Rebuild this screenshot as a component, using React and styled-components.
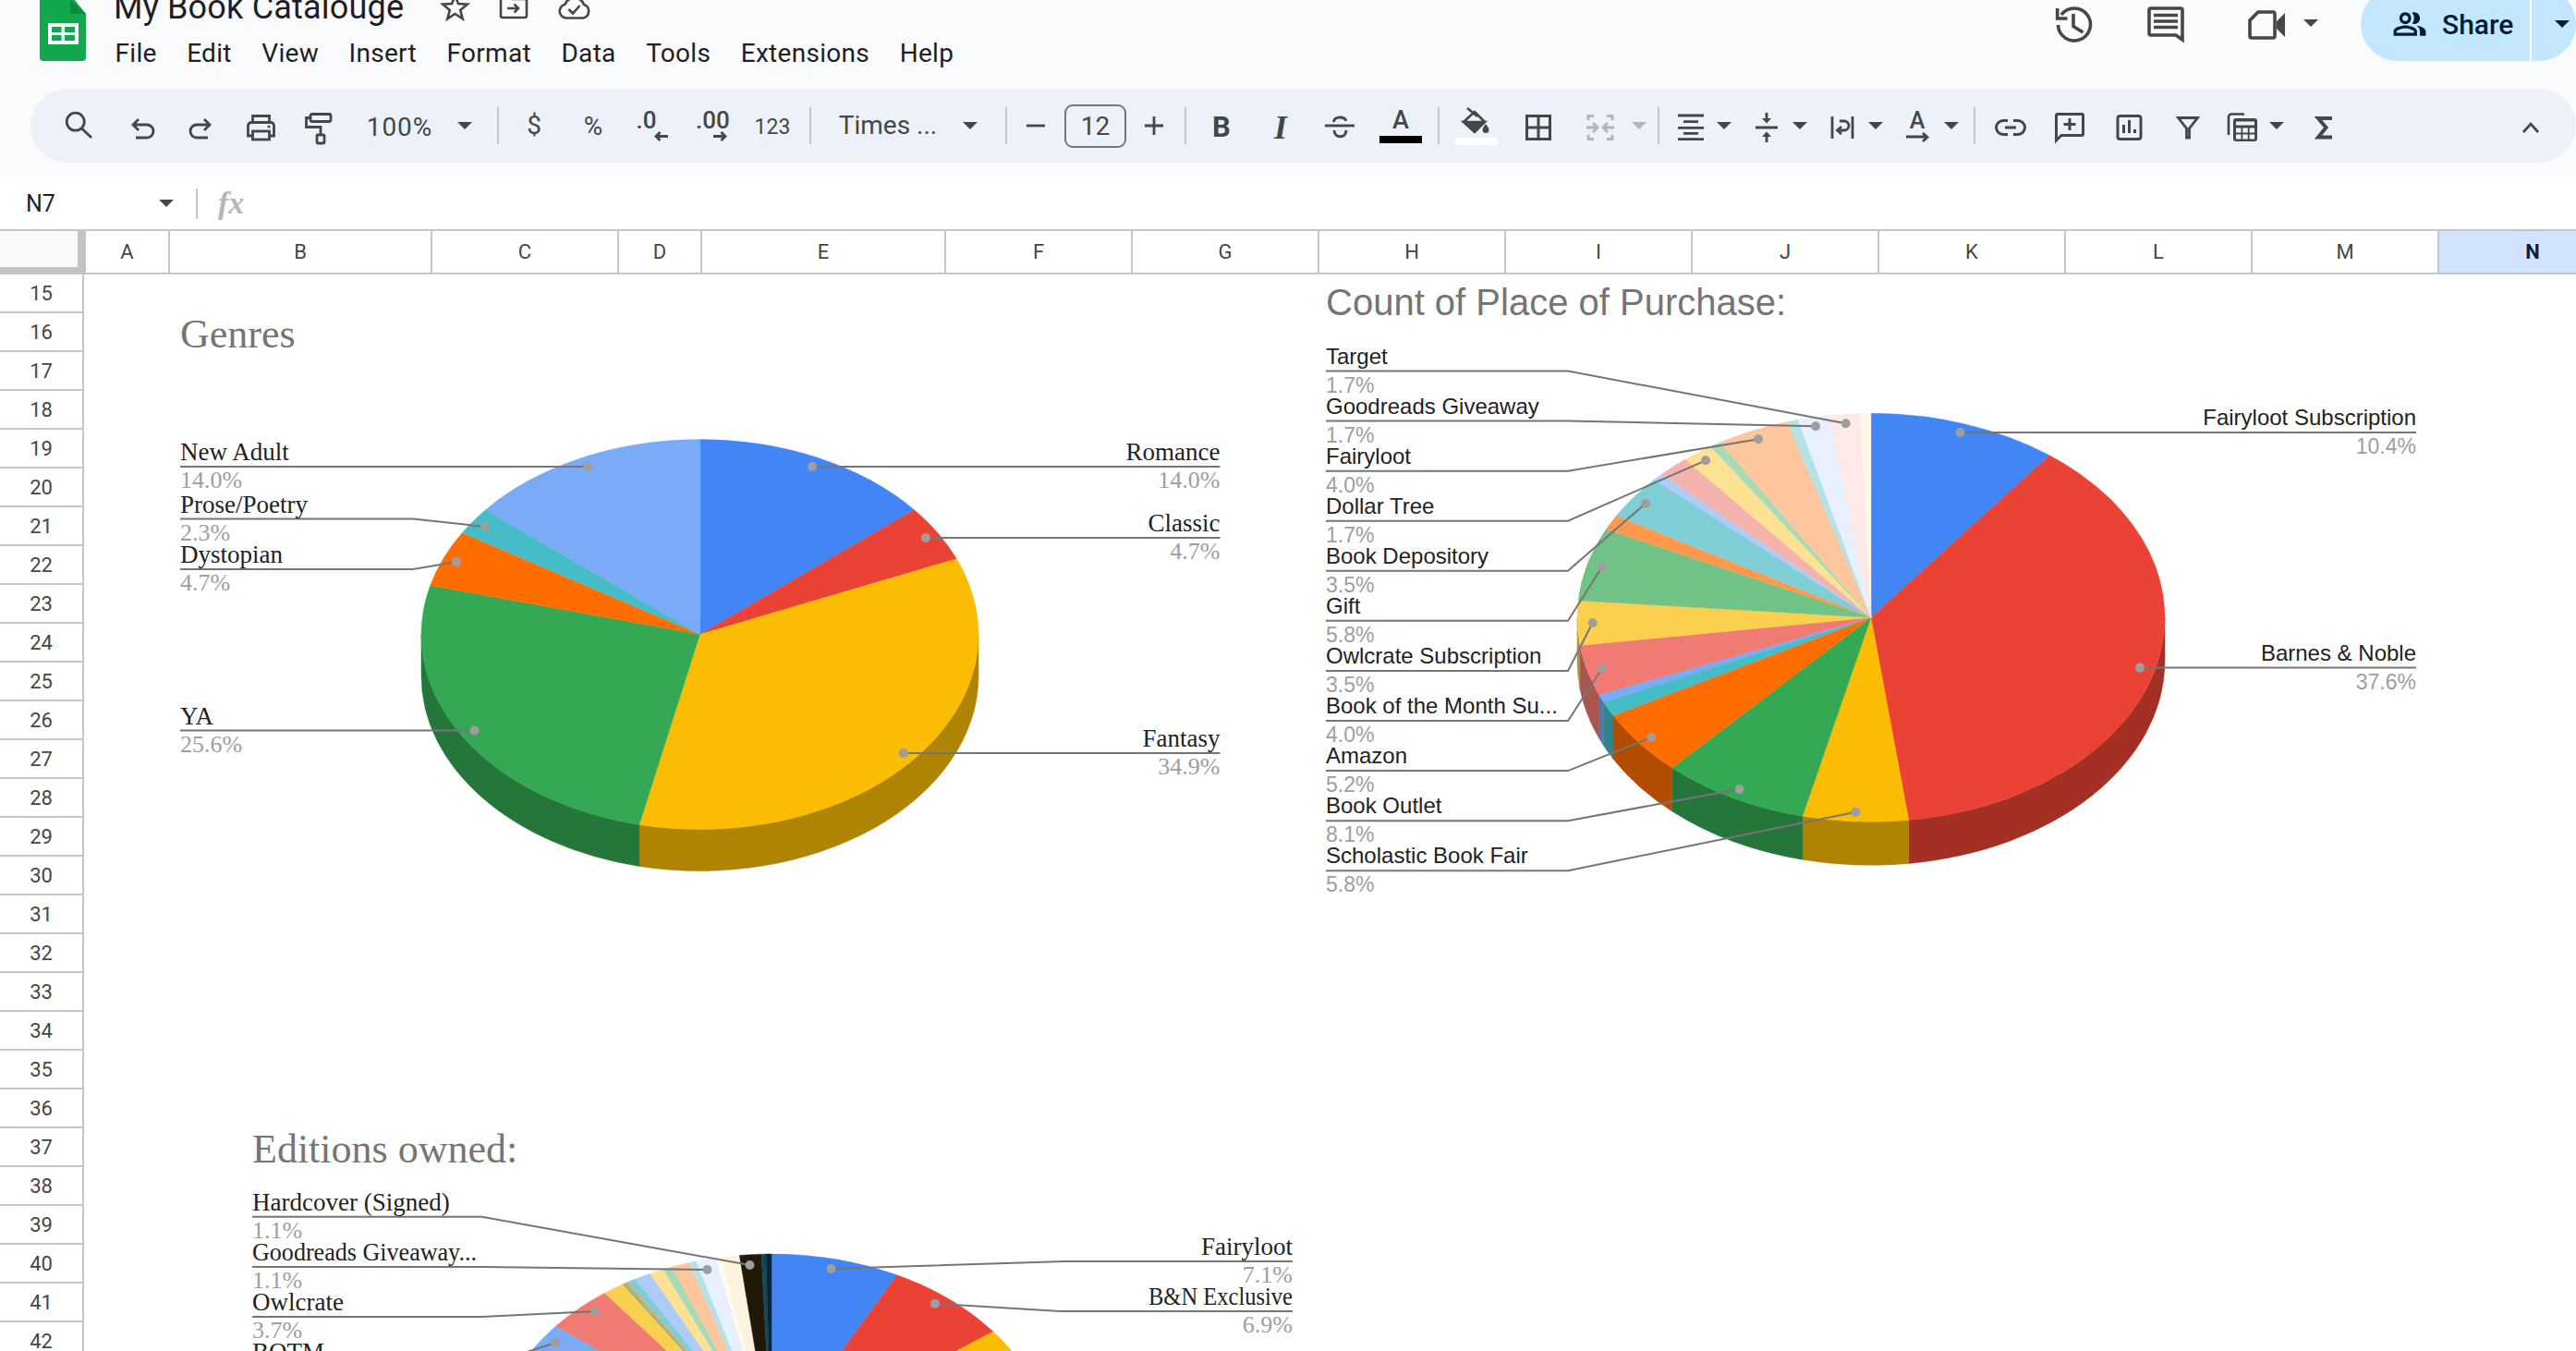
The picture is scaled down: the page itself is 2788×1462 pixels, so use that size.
import React from 'react';
import styled, { createGlobalStyle } from 'styled-components';
import { MdOutlinePeopleAlt } from 'react-icons/md';

const GlobalStyle = createGlobalStyle`
  html, body {
    margin: 0;
    padding: 0;
    background: #ffffff;
  }
  body {
    font-family: Roboto, "Liberation Sans", sans-serif;
    color: #1f1f1f;
  }
`;

const INK = '#444746';
const LINE = '#c4c7c5';

const Page = styled.div`
  width: 2788px;
  height: 1462px;
  overflow: hidden;
  display: flex;
  flex-direction: column;
  background: #fff;
`;

/* top header */
const Header = styled.header`
  height: 96px;
  flex: none;
  display: flex;
  align-items: flex-start;
  padding-left: 43px;
  background: #f9fbfd;
  overflow: hidden;
`;

const TitleBlock = styled.div`
  margin: -13px 0 0 30px;
  display: flex;
  flex-direction: column;
`;

const TitleRow = styled.div`
  height: 42px;
  display: flex;
  align-items: center;
`;

const DocTitle = styled.div`
  font-size: 36px;
  line-height: 42px;
  letter-spacing: 0.2px;
  color: #1f1f1f;
  white-space: nowrap;
`;

const TitleIcon = styled.svg`
  flex: none;
  margin: 4px 0 0 ${p => p.$ml}px;
  overflow: visible;
  fill: none;
  stroke: ${INK};
  stroke-width: 2.6;
`;

const MenuBar = styled.nav`
  display: flex;
  gap: 32.5px;
  margin: 11px 0 0 1.5px;
`;

const MenuItem = styled.span`
  font-size: 28px;
  line-height: 36px;
  letter-spacing: 0.3px;
  color: #1f1f1f;
`;

const HeaderRight = styled.div`
  margin-left: auto;
  display: flex;
  align-items: flex-start;
`;

const HeaderIcon = styled.svg`
  flex: none;
  margin: ${p => p.$mt || 7}px 0 0 ${p => p.$ml || 0}px;
  overflow: visible;
  fill: none;
  stroke: ${INK};
  stroke-width: 3.6;
`;

const ShareButton = styled.div`
  width: 233px;
  height: 80px;
  margin: -14px 0 0 46px;
  flex: none;
  display: flex;
  align-items: center;
  padding-left: 34px;
  box-sizing: border-box;
  background: #c2e7ff;
  border-radius: 40px;
  color: #001d35;
  font-size: 30px;
  font-weight: 500;
`;

const ShareLabel = styled.span`
  margin-left: 16px;
  width: 95px;
`;

const ShareDivider = styled.span`
  width: 2px;
  height: 80px;
  background: #f9fbfd;
`;

const Caret = styled.span`
  flex: none;
  width: 0;
  height: 0;
  margin: ${p => p.$mt || 0}px 0 0 ${p => p.$ml || 0}px;
  border-left: 8px solid transparent;
  border-right: 8px solid transparent;
  border-top: 8px solid ${p => p.$color || INK};
`;

/* toolbar */
const ToolbarWrap = styled.div`
  flex: none;
  height: 96px;
  padding: 0 0 16px 33px;
  box-sizing: border-box;
  background: #f9fbfd;
`;

const Toolbar = styled.div`
  height: 80px;
  display: flex;
  align-items: center;
  padding: 0 17px 0 19px;
  border-radius: 40px;
  background: #edf2fa;
`;

const Tool = styled.div`
  flex: none;
  width: ${p => p.$w || 64}px;
  margin-left: ${p => p.$ml || 0}px;
  display: flex;
  flex-direction: ${p => (p.$column ? 'column' : 'row')};
  align-items: center;
  justify-content: center;
  color: ${INK};
`;

const ToolText = styled.span`
  font-size: ${p => p.$size || 28}px;
  font-weight: ${p => p.$weight || 400};
  letter-spacing: ${p => p.$spacing || 0}px;
  line-height: 1;
  padding-top: ${p => p.$dy ?? 3}px;
  white-space: nowrap;
`;

const ItalicGlyph = styled.span`
  font-family: "Liberation Serif", serif;
  font-style: italic;
  font-weight: 700;
  font-size: 36px;
  line-height: 1;
  padding-top: 3px;
`;

const Sep = styled.span`
  flex: none;
  width: 2px;
  height: 40px;
  margin: 0 ${p => p.$r}px 0 ${p => p.$l}px;
  background: ${LINE};
`;

const FontSizeBox = styled.div`
  flex: none;
  width: 67px;
  height: 47px;
  margin-left: 7px;
  box-sizing: border-box;
  border: 2px solid #747775;
  border-radius: 9px;
  display: flex;
  align-items: center;
  justify-content: center;
  font-size: 28px;
  color: ${INK};
`;

const ColorBar = styled.span`
  display: block;
  width: 46px;
  height: 8px;
  margin-top: ${p => p.$mt}px;
  background: ${p => p.$color};
`;

const DecimalStack = styled.div`
  width: 34px;
  display: flex;
  flex-direction: column;
  font-size: 26px;
  line-height: 21px;
  font-weight: 500;
`;

const ArrowIcon = styled.svg`
  align-self: flex-end;
  display: block;
  margin-top: 1px;
  fill: none;
  stroke: ${INK};
  stroke-width: 2.8;
`;

const Ico = styled.svg.attrs({ width: 36, height: 36, viewBox: '0 0 36 36' })`
  display: block;
  overflow: visible;
  fill: none;
  stroke: ${p => p.$color || INK};
  stroke-width: ${p => p.$sw || 2.8};
`;

const FillIco = styled.svg.attrs({ width: 36, height: 30, viewBox: '0 0 36 30' })`
  display: block;
  overflow: visible;
  fill: none;
  stroke: ${INK};
  stroke-width: 2.6;
`;

const ChevronTool = styled(Tool)`
  margin-left: auto;
`;

/* formula bar */
const FormulaBar = styled.div`
  flex: none;
  height: 56px;
  display: flex;
  align-items: center;
  background: #fff;
`;

const NameBox = styled.div`
  width: 212px;
  padding: 0 24px 0 28px;
  box-sizing: border-box;
  display: flex;
  align-items: center;
  justify-content: space-between;
  font-size: 25px;
  color: #1f1f1f;
`;

const BarDivider = styled.span`
  width: 2px;
  height: 33px;
  background: ${LINE};
`;

const FxMark = styled.span`
  margin-left: 22px;
  font-family: "Liberation Serif", serif;
  font-style: italic;
  font-weight: 700;
  font-size: 34px;
  color: #b4b6b7;
`;

/* column header */
const ColumnHeaders = styled.div`
  flex: none;
  height: 45px;
  display: flex;
  border-top: 2px solid ${LINE};
  border-bottom: 2px solid ${LINE};
`;

const Corner = styled.div`
  flex: none;
  width: 93px;
  height: 47px;
  margin-bottom: -2px;
  box-sizing: border-box;
  background: #f8f9fa;
  border-right: 9px solid #c4c4c4;
  border-bottom: 8px solid #c4c4c4;
`;

const ColHead = styled.div`
  flex: none;
  width: ${p => p.$w}px;
  box-sizing: border-box;
  display: flex;
  align-items: center;
  justify-content: center;
  font-size: 22px;
  font-weight: ${p => (p.$active ? 700 : 400)};
  color: ${p => (p.$active ? '#041e49' : INK)};
  background: ${p => (p.$active ? '#d3e3fd' : '#fff')};
  border-right: ${p => (p.$active ? 'none' : `2px solid ${LINE}`)};
`;

/* sheet */
const Sheet = styled.div`
  flex: 1;
  min-height: 0;
  display: flex;
  overflow: hidden;
`;

const RowHeaders = styled.div`
  flex: none;
  width: 91px;
  box-sizing: border-box;
  border-right: 2px solid ${LINE};
`;

const RowHead = styled.div`
  height: 42px;
  box-sizing: border-box;
  border-bottom: 2px solid ${LINE};
  display: flex;
  align-items: center;
  justify-content: center;
  font-size: 22px;
  color: ${INK};
`;

const Canvas = styled.div`
  position: relative;
  flex: 1;
  background: #fff;
`;

const ChartFrame = styled.svg`
  position: absolute;
  left: ${p => p.$x - 91}px;
  top: ${p => p.$y - 297}px;
  font-family: ${p => (p.$serif ? '"Liberation Serif", serif' : '"Liberation Sans", sans-serif')};
`;

const ChartTitle = styled.text`
  font-size: ${p => p.$size}px;
  fill: #757575;
`;

const LabelName = styled.text`
  font-size: ${p => p.$size}px;
  fill: #222222;
`;

const LabelPct = styled.text`
  font-size: ${p => p.$size}px;
  fill: #9e9e9e;
`;

const Leader = styled.polyline`
  fill: none;
  stroke: #757575;
  stroke-width: 2;
`;

const Dot = styled.circle`
  fill: #9e9e9e;
`;

const COLUMNS = [
  ['A', 91], ['B', 284], ['C', 202], ['D', 90], ['E', 264], ['F', 202], ['G', 202],
  ['H', 202], ['I', 202], ['J', 202], ['K', 202], ['L', 202], ['M', 202], ['N', 202],
];
const ROWS = Array.from({ length: 28 }, (_, i) => 15 + i);
const MENU = ['File', 'Edit', 'View', 'Insert', 'Format', 'Data', 'Tools', 'Extensions', 'Help'];

const darken = (hex) => {
  const n = parseInt(hex.slice(1), 16);
  const part = (v) => Math.round(v * 0.7).toString(16).padStart(2, '0');
  return `#${part(n >> 16)}${part((n >> 8) & 255)}${part(n & 255)}`;
};

const Pie3D = ({ cx, cy, rx, ry, depth, slices }) => {
  const total = slices.reduce((sum, s) => sum + s.pct, 0);
  const pt = (p) => {
    const a = (p / 100) * 2 * Math.PI;
    return [cx + rx * Math.sin(a), cy - ry * Math.cos(a)];
  };
  let acc = 0;
  const parts = slices.map((s) => {
    const from = acc;
    acc += (s.pct / total) * 100;
    return { color: s.color, from, to: acc };
  });
  return (
    <g>
      {parts.map((s, i) => {
        const lo = Math.max(s.from, 25);
        const hi = Math.min(s.to, 75);
        if (hi <= lo) return null;
        const [x0, y0] = pt(lo);
        const [x1, y1] = pt(hi);
        const wall = darken(s.color);
        return (
          <path
            key={`w${i}`}
            fill={wall}
            stroke={wall}
            strokeWidth="0.5"
            d={`M${x0} ${y0}A${rx} ${ry} 0 0 1 ${x1} ${y1}L${x1} ${y1 + depth}A${rx} ${ry} 0 0 0 ${x0} ${y0 + depth}Z`}
          />
        );
      })}
      {parts.map((s, i) => {
        const [x0, y0] = pt(s.from);
        const [x1, y1] = pt(s.to);
        const large = s.to - s.from > 50 ? 1 : 0;
        return (
          <path
            key={`t${i}`}
            fill={s.color}
            stroke={s.color}
            strokeWidth="0.4"
            d={`M${cx} ${cy}L${x0} ${y0}A${rx} ${ry} 0 ${large} 1 ${x1} ${y1}Z`}
          />
        );
      })}
    </g>
  );
};

const Callout = ({ label, size, textX, end, lift = 7 }) => {
  const { name, pct, y, elbow, dot, fit } = label;
  const anchor = end ? 'end' : 'start';
  const points = [[textX, y]];
  if (elbow) points.push([elbow, y]);
  points.push(dot);
  return (
    <g>
      <Leader points={points.map((p) => p.join(',')).join(' ')} />
      <Dot cx={dot[0]} cy={dot[1]} r="5" />
      <LabelName
        x={textX}
        y={y - lift}
        $size={size}
        textAnchor={anchor}
        textLength={fit}
        lengthAdjust={fit ? 'spacingAndGlyphs' : undefined}
      >
        {name}
      </LabelName>
      {pct && <LabelPct x={textX} y={y + 23} $size={size - 1} textAnchor={anchor}>{pct}</LabelPct>}
    </g>
  );
};

const GENRE_SLICES = [
  { pct: 14.0, color: '#4285f4' },
  { pct: 4.7, color: '#ea4335' },
  { pct: 34.9, color: '#fbbc04' },
  { pct: 25.6, color: '#34a853' },
  { pct: 4.7, color: '#ff6d01' },
  { pct: 2.3, color: '#46bdc6' },
  { pct: 14.0, color: '#7baaf7' },
];

const GENRE_LEFT = [
  { name: 'New Adult', pct: '14.0%', y: 505, dot: [636, 505] },
  { name: 'Prose/Poetry', pct: '2.3%', y: 561.5, elbow: 447, dot: [525, 570] },
  { name: 'Dystopian', pct: '4.7%', y: 616, elbow: 447, dot: [494, 608] },
  { name: 'YA', pct: '25.6%', y: 790.5, dot: [513.5, 790.5] },
];

const GENRE_RIGHT = [
  { name: 'Romance', pct: '14.0%', y: 505, dot: [879, 505] },
  { name: 'Classic', pct: '4.7%', y: 582, dot: [1002, 582] },
  { name: 'Fantasy', pct: '34.9%', y: 815, dot: [978, 815] },
];

const PLACE_SLICES = [
  { pct: 10.4, color: '#4285f4' },
  { pct: 37.6, color: '#ea4335' },
  { pct: 5.8, color: '#fbbc04' },
  { pct: 8.1, color: '#34a853' },
  { pct: 5.2, color: '#ff6d01' },
  { pct: 1.2, color: '#46bdc6' },
  { pct: 0.6, color: '#7baaf7' },
  { pct: 4.0, color: '#f07b72' },
  { pct: 3.5, color: '#fcd04f' },
  { pct: 5.8, color: '#71c287' },
  { pct: 1.2, color: '#ff994d' },
  { pct: 3.5, color: '#7fced6' },
  { pct: 0.6, color: '#aecbfa' },
  { pct: 1.7, color: '#f5b3ad' },
  { pct: 1.7, color: '#fde293' },
  { pct: 0.6, color: '#a8dab5' },
  { pct: 4.0, color: '#fdc69c' },
  { pct: 0.6, color: '#b5e2e5' },
  { pct: 1.7, color: '#e8f0fe' },
  { pct: 1.7, color: '#fde9e7' },
  { pct: 0.6, color: '#fff8e7' },
];

const PLACE_LEFT = [
  ['Target', '1.7%', [1997.7, 458.3]],
  ['Goodreads Giveaway', '1.7%', [1965, 461.3]],
  ['Fairyloot', '4.0%', [1903, 475.3]],
  ['Dollar Tree', '1.7%', [1846, 498.3]],
  ['Book Depository', '3.5%', [1781, 544.7]],
  ['Gift', '5.8%', [1734, 613.3]],
  ['Owlcrate Subscription', '3.5%', [1723.7, 674]],
  ['Book of the Month Su...', '4.0%', [1734, 723.3]],
  ['Amazon', '5.2%', [1787.3, 798]],
  ['Book Outlet', '8.1%', [1882.7, 854]],
  ['Scholastic Book Fair', '5.8%', [2008.3, 878.7]],
].map(([name, pct, dot], i) => ({ name, pct, dot, y: 401.5 + 54.07 * i, elbow: 1697 }));

const PLACE_RIGHT = [
  { name: 'Fairyloot Subscription', pct: '10.4%', y: 468, dot: [2121.4, 468] },
  { name: 'Barnes & Noble', pct: '37.6%', y: 722.6, dot: [2316, 722.6] },
];

const EDITION_SLICES = [
  { pct: 7.1, color: '#4285f4' },
  { pct: 6.9, color: '#ea4335' },
  { pct: 10, color: '#fbbc04' },
  { pct: 30, color: '#34a853' },
  { pct: 22.4, color: '#ff6d01' },
  { pct: 5, color: '#7baaf7' },
  { pct: 3.7, color: '#f07b72' },
  { pct: 1.2, color: '#fcd04f' },
  { pct: 0.15, color: '#71c287' },
  { pct: 0.15, color: '#ff994d' },
  { pct: 0.5, color: '#7fced6' },
  { pct: 0.9, color: '#aecbfa' },
  { pct: 0.8, color: '#fde293' },
  { pct: 0.5, color: '#a8dab5' },
  { pct: 1.0, color: '#fdc69c' },
  { pct: 0.4, color: '#b5e2e5' },
  { pct: 1.1, color: '#e8f0fe' },
  { pct: 0.3, color: '#fffbf0' },
  { pct: 1.0, color: '#fdf3e0' },
  { pct: 1.2, color: '#20190a' },
  { pct: 0.25, color: '#0e4a58' },
  { pct: 0.3, color: '#0c2340' },
];

const EDITION_LEFT = [
  { name: 'Hardcover (Signed)', pct: '1.1%', y: 1316.7, elbow: 521.5, dot: [811.5, 1369] },
  { name: 'Goodreads Giveaway...', pct: '1.1%', y: 1371, elbow: 521.5, dot: [765.5, 1374], fit: 243 },
  { name: 'Owlcrate', pct: '3.7%', y: 1425, elbow: 521.5, dot: [644, 1419] },
  { name: 'BOTM', pct: '', y: 1479, elbow: 521.5, dot: [601, 1453] },
];

const EDITION_RIGHT = [
  { name: 'Fairyloot', pct: '7.1%', y: 1365, elbow: 1153, dot: [899.5, 1373] },
  { name: 'B&N Exclusive', pct: '6.9%', y: 1419, elbow: 1148, dot: [1012, 1410.7], fit: 156 },
];

const SheetsLogo = () => (
  <svg width="50" height="66" viewBox="0 0 50 66" style={{ flex: 'none' }}>
    <path fill="#11a84e" d="M0 -6H33L50 15V62a4 4 0 0 1-4 4H4a4 4 0 0 1-4-4Z" />
    <path fill="#0d8a3f" d="M33 0L50 15H33Z" />
    <rect x="9" y="25" width="33" height="23" fill="#fff" />
    <rect x="13" y="29" width="10.5" height="6" fill="#11a84e" />
    <rect x="27" y="29" width="11" height="6" fill="#11a84e" />
    <rect x="13" y="38" width="10.5" height="6" fill="#11a84e" />
    <rect x="27" y="38" width="11" height="6" fill="#11a84e" />
  </svg>
);

const App = () => (
  <Page>
    <GlobalStyle />
    <Header>
      <SheetsLogo />
      <TitleBlock>
        <TitleRow>
          <DocTitle>My Book Catalouge</DocTitle>
          <TitleIcon $ml={41} width="29" height="24" viewBox="0 0 29 24">
            <path d="M14.5-3L18 6.1 27.8 6.7 20.2 12.9 22.7 22.3 14.5 17 6.3 22.3 8.8 12.9 1.2 6.7 11 6.1Z" />
          </TitleIcon>
          <TitleIcon $ml={33} width="32" height="24" viewBox="0 0 32 24">
            <path d="M2-2V19a2 2 0 0 0 2 2H28a2 2 0 0 0 2-2V3a2 2 0 0 0-2-2H15l-3-3" />
            <path d="M9 11H21M16.5 6.5L21 11 16.5 15.5" />
          </TitleIcon>
          <TitleIcon $ml={32} width="35" height="24" viewBox="0 0 35 24">
            <path d="M9 21.5a7.5 7.5 0 0 1-1.5-14.8A11 11 0 0 1 28 7a7.5 7.5 0 0 1-1 14.5Z" />
            <path d="M11.5 12L16 16.5 23.5 8" />
          </TitleIcon>
        </TitleRow>
        <MenuBar>
          {MENU.map((m) => <MenuItem key={m}>{m}</MenuItem>)}
        </MenuBar>
      </TitleBlock>
      <HeaderRight>
        <HeaderIcon width="40" height="40" viewBox="0 0 40 40">
          <path d="M6 9A17.5 17.5 0 1 1 2.5 20" />
          <path d="M1.7 2V13H12.5" />
          <path d="M19 8V21.5L29.5 28" />
        </HeaderIcon>
        <HeaderIcon $ml={59} width="40" height="40" viewBox="0 0 40 40">
          <path d="M4 2H36a2 2 0 0 1 2 2V36L31 31H4a2 2 0 0 1-2-2V4a2 2 0 0 1 2-2Z" />
          <path d="M7 9.5H33M7 16H33M7 22.5H33" strokeWidth="3.4" />
        </HeaderIcon>
        <HeaderIcon $ml={69} $mt={11} width="40" height="34" viewBox="0 0 40 34">
          <path d="M11 2H27a2 2 0 0 1 2 2V28a2 2 0 0 1-2 2H4a2 2 0 0 1-2-2V11Z" />
          <path d="M31 12L40 3V29L31 20Z" fill={INK} stroke="none" />
        </HeaderIcon>
        <Caret $ml={20} $mt={21} />
        <ShareButton>
          <MdOutlinePeopleAlt size={38} />
          <ShareLabel>Share</ShareLabel>
          <ShareDivider />
          <Caret $color="#001d35" $ml={25} />
        </ShareButton>
      </HeaderRight>
    </Header>

    <ToolbarWrap>
      <Toolbar>
        <Tool $w={68}>
          <Ico><circle cx="13.7" cy="13.7" r="9.5" /><path d="M20 20.5L31 31" /></Ico>
        </Tool>
        <Tool $w={68}>
          <Ico><path d="M14 11L8 17L14 23M8 17H23a7 7 0 0 1 0 14H11" /></Ico>
        </Tool>
        <Tool $w={58}>
          <Ico><path d="M22 11L28 17L22 23M28 17H14a7 7 0 0 0 0 14H26" /></Ico>
        </Tool>
        <Tool $w={72}>
          <Ico>
            <path d="M9.5 14V7.5H27.5V14" />
            <path d="M9 29H4.5V18a3.5 3.5 0 0 1 3.5-3.5H29a3.5 3.5 0 0 1 3.5 3.5V29H28" />
            <rect x="9.5" y="24" width="18" height="9" />
            <circle cx="27" cy="19" r="1.6" fill={INK} stroke="none" />
          </Ico>
        </Tool>
        <Tool $w={52}>
          <Ico>
            <rect x="10" y="5.5" width="22" height="8" rx="2" />
            <path d="M10 9.5H5.5V19.5H21V27" />
            <rect x="17" y="28" width="8" height="9" rx="1" />
          </Ico>
        </Tool>
        <Tool $w={125}><ToolText $spacing={1}>100%</ToolText></Tool>
        <Tool $w={16}><Caret /></Tool>
        <Sep $l={27} $r={6} />
        <Tool><ToolText $dy={0}>$</ToolText></Tool>
        <Tool><ToolText $dy={2}>%</ToolText></Tool>
        <Tool $w={63}>
          <DecimalStack>
            <span>.0</span>
            <ArrowIcon width="15" height="11" viewBox="0 0 15 11">
              <path d="M15 5.5H2M6.5 1L2 5.5 6.5 10" />
            </ArrowIcon>
          </DecimalStack>
        </Tool>
        <Tool $w={66}>
          <DecimalStack>
            <span>.00</span>
            <ArrowIcon width="15" height="11" viewBox="0 0 15 11">
              <path d="M0 5.5H13M8.5 1L13 5.5 8.5 10" />
            </ArrowIcon>
          </DecimalStack>
        </Tool>
        <Tool $w={66}><ToolText $size={23}>123</ToolText></Tool>
        <Sep $l={7} $r={7} />
        <Tool $w={152}><ToolText $dy={0}>Times ...</ToolText></Tool>
        <Tool $w={26}><Caret /></Tool>
        <Sep $l={25} $r={7} />
        <Tool $w={48}><Ico><path d="M8 18H28" /></Ico></Tool>
        <FontSizeBox>12</FontSizeBox>
        <Tool $w={60}><Ico><path d="M8 18H28M18 8V28" /></Ico></Tool>
        <Sep $l={3} $r={6} />
        <Tool><ToolText $size={31} $weight={700}>B</ToolText></Tool>
        <Tool><ItalicGlyph>I</ItalicGlyph></Tool>
        <Tool>
          <Ico>
            <path d="M2 18H34" />
            <path d="M11.5 14C11.5 7.5 24.5 7.5 24.5 13" strokeWidth="3" />
            <path d="M12 23C12 32 25 32 25 23" strokeWidth="3" />
          </Ico>
        </Tool>
        <Tool $w={68} $column>
          <ToolText $size={27} $dy={0} $weight={500}>A</ToolText>
          <ColorBar $color="#000000" $mt={3} />
        </Tool>
        <Sep $l={6} $r={8} />
        <Tool $column>
          <FillIco>
            <path d="M4 17L16 6L27 17" />
            <path d="M4 17H27L16 28Z" fill={INK} />
            <path d="M8 2L19 11" />
            <path d="M28 19c-2 3-3.5 4.5-3.5 6.5a3.5 3.5 0 0 0 7 0c0-2-1.5-3.5-3.5-6.5z" fill={INK} stroke="none" />
          </FillIco>
          <ColorBar $color="#ffffff" $mt={4} />
        </Tool>
        <Tool $w={70}>
          <Ico $sw={3}>
            <rect x="5.5" y="7.5" width="25" height="25" />
            <path d="M18 7.5V32.5M5.5 20H30.5" />
          </Ico>
        </Tool>
        <Tool>
          <Ico $color="#b1b6bd">
            <path d="M11 7.5H5V12M5 28V32.5H11M25 7.5H31V12M31 28V32.5H25" />
            <path d="M3 20H14M10 15L15 20 10 25M33 20H22M26 15L21 20 26 25" />
          </Ico>
        </Tool>
        <Tool $w={20}><Caret $color="#b1b6bd" /></Tool>
        <Sep $l={10} $r={6} />
        <Tool $w={56}>
          <Ico><path d="M4 7H32M10 13.7H26M4 20.3H32M10 26.3H26M4 32.7H32" /></Ico>
        </Tool>
        <Tool $w={16}><Caret /></Tool>
        <Tool $w={56} $ml={10}>
          <Ico>
            <path d="M6 20H30M18 4V12M18 36V28" />
            <path d="M13 10H23L18 15.5ZM13 30H23L18 24.5Z" fill={INK} stroke="none" />
          </Ico>
        </Tool>
        <Tool $w={16}><Caret /></Tool>
        <Tool $w={56} $ml={10}>
          <Ico>
            <path d="M7 8V32M29 8V32" />
            <path d="M15 13H20a5 5 0 0 1 0 10H13" />
            <path d="M17 19L12.5 23 17 27" />
          </Ico>
        </Tool>
        <Tool $w={16}><Caret /></Tool>
        <Tool $w={56} $ml={9} $column>
          <ToolText $size={25} $dy={0} $weight={500}>A</ToolText>
          <svg width="26" height="12" viewBox="0 0 26 12" fill="none" stroke={INK} strokeWidth="2.8">
            <path d="M1 5H23M19 1L24 5.5 19 10" />
          </svg>
        </Tool>
        <Tool $w={16} $ml={1}><Caret /></Tool>
        <Sep $l={16} $r={6} />
        <Tool>
          <Ico $sw={3}>
            <path d="M15 12.5H10a7.5 7.5 0 0 0 0 15H15M21 12.5H26a7.5 7.5 0 0 1 0 15H21M12 20H24" />
          </Ico>
        </Tool>
        <Tool>
          <Ico $sw={3}>
            <path d="M5 5.5H31a1.5 1.5 0 0 1 1.5 1.5V27a1.5 1.5 0 0 1-1.5 1.5H9L3.5 34V7a1.5 1.5 0 0 1 1.5-1.5Z" />
            <path d="M18 10V23M11.5 16.5H24.5" />
          </Ico>
        </Tool>
        <Tool>
          <Ico $sw={3}>
            <rect x="6" y="7.5" width="25" height="25" rx="2.5" />
            <path d="M12.5 26V17M18.5 26V12M24.5 26V22" />
          </Ico>
        </Tool>
        <Tool>
          <Ico><path d="M7.5 9.5H28.5L19.5 21V31H16.5V21Z" /></Ico>
        </Tool>
        <Tool $w={54}>
          <Ico $sw={2.6}>
            <path d="M20 5.5H6a3 3 0 0 0-3 3V28" />
            <rect x="8" y="10" width="26" height="25" rx="3" fill={INK} stroke="none" />
            <rect x="11" y="13.5" width="20" height="4" fill="#edf2fa" stroke="none" />
            <path fill="#edf2fa" stroke="none" d="M11 20.5h5.5v5H11zM18.3 20.5h5.5v5h-5.5zM25.6 20.5h5.5v5h-5.5zM11 27.5h5.5v5H11zM18.3 27.5h5.5v5h-5.5zM25.6 27.5h5.5v5h-5.5z" />
          </Ico>
        </Tool>
        <Tool $w={16} $ml={2}><Caret /></Tool>
        <Tool $ml={11}>
          <Ico $sw={4}><path d="M27 10H12L20.5 20 12 30.5H27" /></Ico>
        </Tool>
        <ChevronTool>
          <Ico><path d="M10 25L18 16 26 25" /></Ico>
        </ChevronTool>
      </Toolbar>
    </ToolbarWrap>

    <FormulaBar>
      <NameBox>
        <span>N7</span>
        <Caret />
      </NameBox>
      <BarDivider />
      <FxMark>fx</FxMark>
    </FormulaBar>

    <ColumnHeaders>
      <Corner />
      {COLUMNS.map(([name, w]) => (
        <ColHead key={name} $w={w} $active={name === 'N'}>{name}</ColHead>
      ))}
    </ColumnHeaders>

    <Sheet>
      <RowHeaders>
        {ROWS.map((r) => <RowHead key={r}>{r}</RowHead>)}
      </RowHeaders>
      <Canvas>
        <ChartFrame $x={180} $y={330} $serif width="1160" height="640" viewBox="180 330 1160 640">
          <ChartTitle x="195" y="375.5" $size={44}>Genres</ChartTitle>
          <Pie3D cx={757.5} cy={686.5} rx={301.5} ry={211} depth={45} slices={GENRE_SLICES} />
          {GENRE_LEFT.map((l) => <Callout key={l.name} label={l} size={27} textX={195} />)}
          {GENRE_RIGHT.map((l) => <Callout key={l.name} label={l} size={27} textX={1320.5} end />)}
        </ChartFrame>

        <ChartFrame $x={1420} $y={298} width="1220" height="690" viewBox="1420 298 1220 690">
          <ChartTitle x="1435" y="340.5" $size={40}>Count of Place of Purchase:</ChartTitle>
          <Pie3D cx={2025} cy={668.3} rx={318} ry={221} depth={47} slices={PLACE_SLICES} />
          {PLACE_LEFT.map((l) => <Callout key={l.name} label={l} size={24} textX={1435} lift={8} />)}
          {PLACE_RIGHT.map((l) => <Callout key={l.name} label={l} size={24} textX={2615} lift={8} end />)}
        </ChartFrame>

        <ChartFrame $x={250} $y={1210} $serif width="1170" height="300" viewBox="250 1210 1170 300">
          <ChartTitle x="273" y="1258" $size={44}>Editions owned:</ChartTitle>
          <Pie3D cx={835} cy={1567} rx={300} ry={210} depth={45} slices={EDITION_SLICES} />
          {EDITION_LEFT.map((l) => <Callout key={l.name} label={l} size={27} textX={273} />)}
          {EDITION_RIGHT.map((l) => <Callout key={l.name} label={l} size={27} textX={1399} end />)}
        </ChartFrame>
      </Canvas>
    </Sheet>
  </Page>
);

export default App;
